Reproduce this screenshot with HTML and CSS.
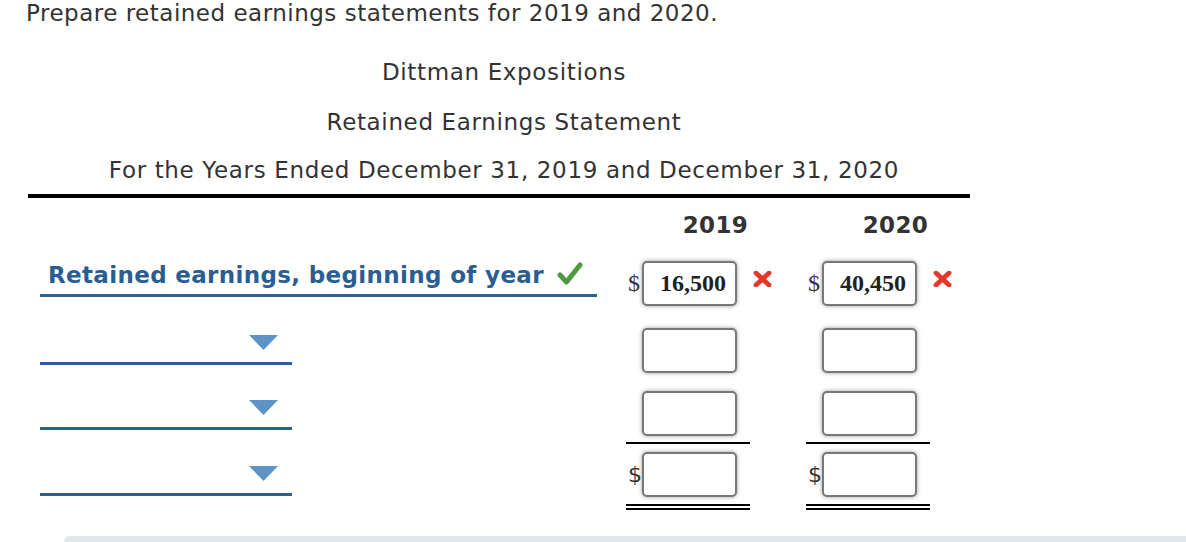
FILE: index.html
```html
<!DOCTYPE html>
<html lang="en">
<head>
<meta charset="utf-8">
<title>Retained Earnings Statement</title>
<link rel="stylesheet" href="styles.css">
</head>
<body>
<p class="prompt">Prepare retained earnings statements for 2019 and 2020.</p>
<div class="sheet">
  <div class="heading">
    <div class="heading-line">Dittman Expositions</div>
    <div class="heading-line">Retained Earnings Statement</div>
    <div class="heading-line">For the Years Ended December 31, 2019 and December 31, 2020</div>
  </div>
  <div class="grid">
    <div></div>
    <div class="year">2019</div>
    <div></div>
    <div class="year">2020</div>
    <div></div>

    <div class="label-cell"><span class="label">Retained earnings, beginning of year</span><svg class="check" width="26" height="24" viewBox="0 0 26 24"><path d="M3 13 L9.5 20 L23 3" fill="none" stroke="#4f9a3e" stroke-width="5" stroke-linecap="round" stroke-linejoin="round"/></svg></div>
    <div class="val r1"><span class="cur serif">$</span><span class="box">16,500</span></div>
    <div class="mark r1"><svg width="19" height="16" viewBox="0 0 19 16"><path d="M3 2 L16 14 M16 2 L3 14" stroke="#e6372c" stroke-width="4.8" stroke-linecap="round"/></svg></div>
    <div class="val r1"><span class="cur serif">$</span><span class="box">40,450</span></div>
    <div class="mark r1"><svg width="19" height="16" viewBox="0 0 19 16"><path d="M3 2 L16 14 M16 2 L3 14" stroke="#e6372c" stroke-width="4.8" stroke-linecap="round"/></svg></div>

    <div class="drop-cell"><div class="drop"><svg width="29" height="15" viewBox="0 0 29 15"><path d="M0 0 H29 L14.5 15 Z" fill="#5e93c8"/></svg></div></div>
    <div class="val r2"><span class="cur"></span><span class="box"></span></div>
    <div></div>
    <div class="val r2"><span class="cur"></span><span class="box"></span></div>
    <div></div>

    <div class="drop-cell"><div class="drop"><svg width="29" height="15" viewBox="0 0 29 15"><path d="M0 0 H29 L14.5 15 Z" fill="#5e93c8"/></svg></div></div>
    <div class="val r3"><span class="cur"></span><span class="box"></span></div>
    <div></div>
    <div class="val r3"><span class="cur"></span><span class="box"></span></div>
    <div></div>

    <div class="drop-cell"><div class="drop"><svg width="29" height="15" viewBox="0 0 29 15"><path d="M0 0 H29 L14.5 15 Z" fill="#5e93c8"/></svg></div></div>
    <div class="val r4"><span class="cur">$</span><span class="box"></span></div>
    <div></div>
    <div class="val r4"><span class="cur">$</span><span class="box"></span></div>
    <div></div>
  </div>
</div>
<div class="next-panel"></div>
</body>
</html>
```

FILE: styles.css
```css
html, body {
  margin: 0;
  padding: 0;
  background: #fff;
  overflow: hidden;
}
body {
  font-family: "DejaVu Sans", Verdana, sans-serif;
  color: #333;
}
.prompt {
  margin: 0;
  padding-left: 26px;
  font-size: 23px;
  letter-spacing: 0.5px;
  line-height: 26px;
}
.sheet {
  margin-left: 28px;
  width: 942px;
}
.heading {
  margin-top: 21px;
  padding-left: 10px;
  border-bottom: 4px solid #000;
  text-align: center;
}
.heading-line {
  font-size: 23px;
  letter-spacing: 0.65px;
  line-height: 50px;
}
.heading-line:last-child {
  line-height: 47px;
}
.grid {
  display: grid;
  grid-template-columns: 598px 124px 56px 124px 40px;
  grid-template-rows: 54px 64px 63px 65px 66px;
}
.year {
  align-self: center;
  text-align: right;
  padding-right: 2px;
  font-weight: bold;
  font-size: 23px;
  letter-spacing: 0.3px;
}
.label-cell {
  align-self: end;
  margin-bottom: 19px;
  margin-left: 12px;
  padding-left: 8px;
  width: 549px;
  border-bottom: 3px solid #2a5f97;
  padding-bottom: 4px;
  display: flex;
  align-items: center;
  height: 30px;
}
.label {
  color: #2a5d92;
  font-weight: bold;
  font-size: 23px;
  letter-spacing: 0.35px;
  line-height: 30px;
}
.check {
  margin-left: 13px;
  margin-top: -2px;
}
.drop-cell {
  align-self: end;
  margin-bottom: 14px;
  margin-left: 12px;
}
.drop {
  width: 252px;
  height: 45px;
  border-bottom: 3px solid #2a5f97;
  display: flex;
  justify-content: flex-end;
  align-items: flex-end;
  padding-bottom: 12px;
  box-sizing: border-box;
}
.drop svg {
  margin-right: 14px;
  display: block;
}
.val {
  display: flex;
  align-items: center;
  align-self: start;
}
.r1 { padding-top: 9px; }
.r2 { padding-top: 12px; }
.r3 {
  padding-top: 12px;
  padding-bottom: 6px;
  border-bottom: 2px solid #000;
}
.r4 {
  padding-top: 8px;
  padding-bottom: 7px;
  border-bottom: 6px double #000;
}
.mark.r1 {
  padding-top: 19px;
  padding-left: 3px;
}
.mark svg { display: block; }
.cur {
  width: 14px;
  padding-left: 2px;
  font-size: 22px;
  color: #333;
}
.cur.serif {
  font-family: "Liberation Serif", "Times New Roman", serif;
  font-size: 24px;
}
.box {
  box-sizing: border-box;
  width: 95px;
  height: 45px;
  border: 2px solid #787878;
  border-radius: 5px;
  box-shadow: 0 0 4px rgba(0,0,0,0.4);
  background: #fff;
  font-family: "Liberation Serif", "Times New Roman", serif;
  font-weight: bold;
  font-size: 24px;
  line-height: 41px;
  text-align: right;
  padding-right: 9px;
  color: #222;
}
.next-panel {
  margin-top: 26px;
  margin-left: 64px;
  height: 6px;
  background: #e1e7ea;
  border-top-left-radius: 7px;
}
```
